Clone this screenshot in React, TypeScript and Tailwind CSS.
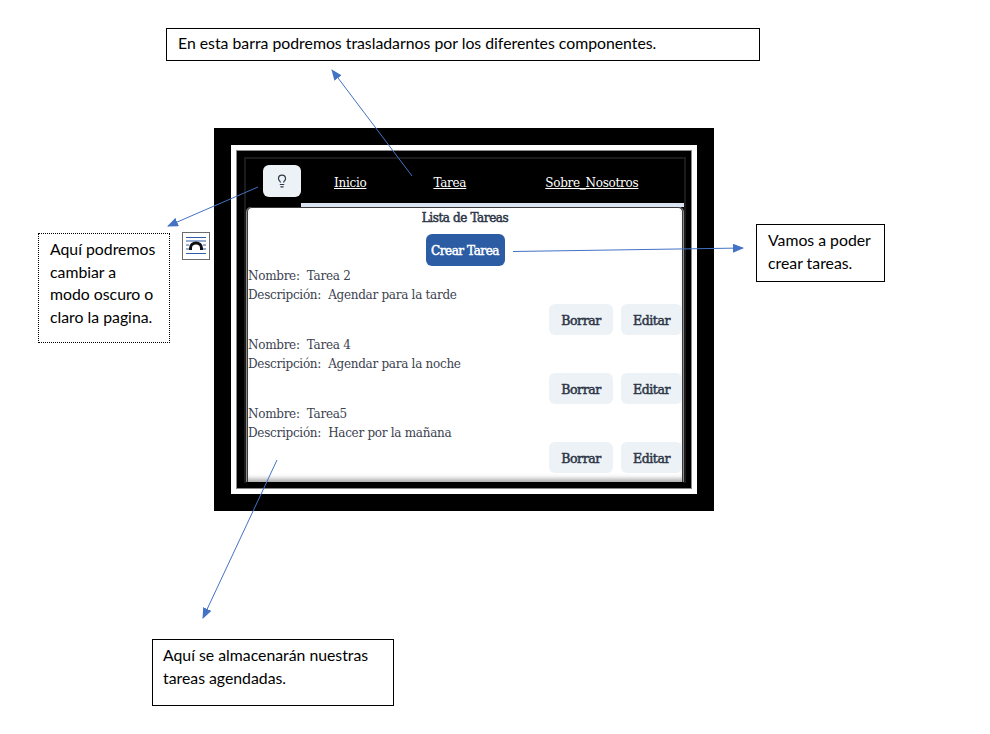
import { Lightbulb } from "lucide-react";

const tasks = [
  { name: "Tarea 2", desc: "Agendar para la tarde" },
  { name: "Tarea 4", desc: "Agendar para la noche" },
  { name: "Tarea5", desc: "Hacer por la mañana" },
];

const slab = "font-['Roboto_Slab','DejaVu_Serif','Liberation_Serif',serif]";

function TaskRow({ name, desc }: { name: string; desc: string }) {
  return (
    <div className="h-[69px] pt-[1px] text-[12px] leading-[19px] tracking-[-0.28px] text-[#3b4250]">
      <p className="whitespace-pre">Nombre:  {name}</p>
      <p className="whitespace-pre">Descripción:  {desc}</p>
      <div className="mt-[-1px] flex justify-end gap-2">
        <button className="h-[31px] w-[64px] rounded-md bg-[#edf2f7] pt-[1px] text-[12.5px] tracking-[-0.4px] text-[#2d3748] [-webkit-text-stroke:0.5px_#2d3748]">Borrar</button>
        <button className="h-[31px] w-[61px] rounded-md bg-[#edf2f7] pt-[1px] text-[12.5px] tracking-[-0.4px] text-[#2d3748] [-webkit-text-stroke:0.5px_#2d3748]">Editar</button>
      </div>
    </div>
  );
}

function AppShot() {
  return (
    <div className={`absolute left-[214px] top-[128px] h-[383px] w-[500px] bg-black p-[17px] ${slab}`}>
      <div className="h-[349px] w-[466px] bg-white p-[5px]">
        <div className="h-[339px] w-[456px] border border-[#8a8a8a] bg-black pl-[7px] pr-[5px] pt-[6px] pb-[5px]">
          <div className="flex h-full flex-col border-x-2 border-t-2 border-[#1c1c1c] bg-black">
            <nav className="flex h-[44px] shrink-0 items-start text-[12px] tracking-[-0.28px] text-white">
              <button className="ml-[17px] mt-[6px] flex h-[32px] w-[38px] items-center justify-center rounded-md bg-[#edf2f7]">
                <Lightbulb size={14} strokeWidth={2} className="text-[#2d3748]" />
              </button>
              <a className="ml-[33px] mt-[13px] underline">Inicio</a>
              <a className="ml-[67px] mt-[13px] underline">Tarea</a>
              <a className="ml-[79px] mt-[13px] underline">Sobre_Nosotros</a>
            </nav>
            <div className="ml-[55px] h-[4px] shrink-0 bg-[#dbe4f3]" />
            <div className="ml-[1px] mr-[1px] h-[275px] rounded-t-[5px] border-x border-t border-[#3a3a3a] bg-white shadow-[-1px_0_0_#8a8a8a,1px_0_0_#8a8a8a,inset_0_-6px_5px_-3px_rgba(0,0,0,0.35)]">
              <h2 className="pt-[2px] text-center text-[12px] leading-[17px] tracking-[-0.4px] text-[#2d3748] [-webkit-text-stroke:0.5px_#2d3748]">Lista de Tareas</h2>
              <div className="mt-[7px] flex justify-center">
                <button className="h-[32px] w-[79px] whitespace-nowrap rounded-md bg-[#2b5ca4] pt-[3px] text-[12px] tracking-[-0.45px] text-white [-webkit-text-stroke:0.5px_#ffffff]">Crear Tarea</button>
              </div>
              {tasks.map((t) => (
                <TaskRow key={t.name} {...t} />
              ))}
            </div>
          </div>
        </div>
      </div>
    </div>
  );
}

export default function App() {
  return (
    <div className="relative h-[734px] w-[990px] overflow-hidden bg-white font-['Lato','Liberation_Sans',sans-serif] text-[15.8px] leading-[22.7px] text-black">
      <div className="absolute left-[166px] top-[28px] flex h-[33px] w-[594px] items-center border border-black pl-[11px] pb-[2px]">
        En esta barra podremos trasladarnos por los diferentes componentes.
      </div>

      <AppShot />

      <div className="absolute left-[38px] top-[233px] h-[110px] w-[132px] border border-dotted border-black pl-[11px] pt-[4px]">
        Aquí podremos<br />cambiar a<br />modo oscuro o<br />claro la pagina.
      </div>

      <div className="absolute left-[182px] top-[232px] h-[28px] w-[28px] border border-[#6b6b6b] bg-white">
        <svg width="26" height="26" viewBox="0 0 26 26">
          <path d="M3 4.5h20M3 8h20M3 12h3M20 12h3M3 16h3M20 16h3M3 20.5h20" stroke="#2f5ea8" strokeWidth="1" />
          <path d="M7.5 17v-2a5.5 5 0 0 1 11 0v2" fill="none" stroke="#111" strokeWidth="3" />
        </svg>
      </div>

      <div className="absolute left-[756px] top-[224px] h-[58px] w-[129px] border border-black pl-[11px] pt-[4px]">
        Vamos a poder<br />crear tareas.
      </div>

      <div className="absolute left-[152px] top-[639px] h-[67px] w-[242px] border border-black pl-[10px] pt-[4px]">
        Aquí se almacenarán nuestras<br />tareas agendadas.
      </div>

      {/* flechas de las anotaciones */}
      <svg className="pointer-events-none absolute left-0 top-0" width="990" height="734">
        <defs>
          <marker id="head" markerWidth="11" markerHeight="9" refX="10" refY="4.5" orient="auto" markerUnits="userSpaceOnUse">
            <path d="M0 0L11 4.5L0 9Z" fill="#4472c4" />
          </marker>
        </defs>
        <g stroke="#4472c4" strokeWidth="1" fill="none">
          <line x1="412" y1="176" x2="332" y2="70" markerEnd="url(#head)" />
          <line x1="258" y1="187" x2="168" y2="226" markerEnd="url(#head)" />
          <line x1="513" y1="251.5" x2="743" y2="248" markerEnd="url(#head)" />
          <line x1="277" y1="460" x2="203" y2="618" markerEnd="url(#head)" />
        </g>
      </svg>
    </div>
  );
}
